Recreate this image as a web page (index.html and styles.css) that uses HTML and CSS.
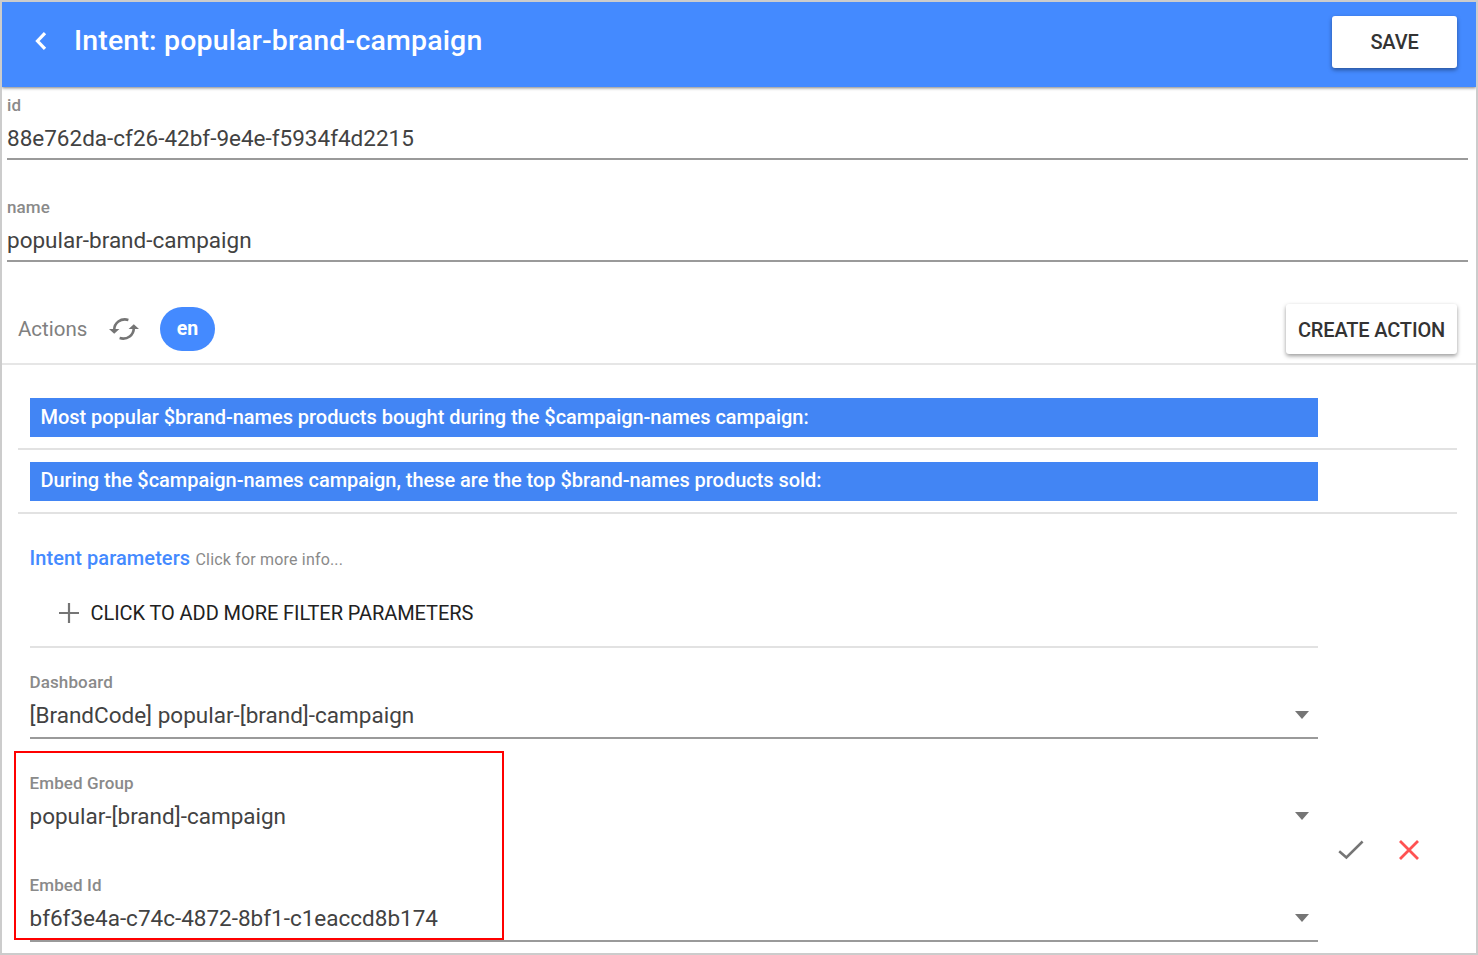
FILE: index.html
```html
<!DOCTYPE html>
<html lang="en">
<head>
<meta charset="utf-8">
<title>Intent: popular-brand-campaign</title>
<link rel="stylesheet" href="styles.css">
</head>
<body>
<div class="window">
  <header class="toolbar">
    <svg class="back" width="14" height="20" viewBox="0 0 14 20"><path d="M12 2.200 4.500 10l7.500 7.800" fill="none" stroke="#fff" stroke-width="3.200"/></svg>
    <h1 class="title"><span>Intent: popular-brand-campaign</span></h1>
    <button class="btn save"><span>SAVE</span></button>
  </header>
  <section class="details">
    <div class="field"><label class="label"><span>id</span></label><div class="value"><span>88e762da-cf26-42bf-9e4e-f5934f4d2215</span></div></div>
    <div class="field"><label class="label"><span>name</span></label><div class="value"><span>popular-brand-campaign</span></div></div>
  </section>
  <section class="actions">
    <span class="actions-title">Actions</span>
    <svg class="refresh" width="30" height="24" viewBox="0 0 30 24"><g fill="none" stroke="#757575" stroke-width="2.6"><path d="M5.2 13C5.2 6 11.5 .8 19.4 2.9"/><path d="M24.8 11C24.8 18 18.500 23.2 10.600 21.100"/></g><path d="M0 12h10.400L5.200 16.800zM30 12H19.600L24.800 7.200z" fill="#757575"/></svg>
    <span class="lang">en</span>
    <button class="btn create"><span>CREATE ACTION</span></button>
  </section>
  <ul class="phrases">
    <li class="phrase"><div class="phrase-text"><span>Most popular $brand-names products bought during the $campaign-names campaign:</span></div></li>
    <li class="phrase"><div class="phrase-text"><span>During the $campaign-names campaign, these are the top $brand-names products sold:</span></div></li>
  </ul>
  <section class="editor">
    <div class="form">
      <div class="params"><span class="params-title">Intent parameters</span><span class="params-info">Click for more info...</span></div>
      <div class="add">
        <svg width="20" height="20" viewBox="0 0 20 20"><path d="M0 10h20M10 0v20" stroke="#757575" stroke-width="2.200"/></svg>
        <span class="add-text">CLICK TO ADD MORE FILTER PARAMETERS</span>
      </div>
      <div class="field select"><label class="label"><span>Dashboard</span></label><div class="value"><span>[BrandCode] popular-[brand]-campaign</span><i class="caret"></i></div></div>
      <div class="field select plain"><label class="label"><span>Embed Group</span></label><div class="value"><span>popular-[brand]-campaign</span><i class="caret"></i></div></div>
      <div class="field select"><label class="label"><span>Embed Id</span></label><div class="value"><span>bf6f3e4a-c74c-4872-8bf1-c1eaccd8b174</span><i class="caret"></i></div></div>
    </div>
    <div class="tools">
      <svg width="26" height="20" viewBox="0 0 26 20"><path d="M1.200 11.200 8.400 17.500 24.600 1.500" fill="none" stroke="#757575" stroke-width="2.500"/></svg>
      <svg width="20" height="20" viewBox="0 0 20 20"><path d="M1 1l18 18M19 1 1 19" fill="none" stroke="#ff5252" stroke-width="2.800"/></svg>
    </div>
  </section>
  <div class="highlight"></div>
</div>
</body>
</html>
```
FILE: styles.css
```css
* { box-sizing: border-box; }
body { margin: 0; background: #fff; font-family: Roboto, "Liberation Sans", sans-serif; color: #424242; }
.window { position: relative; width: 1478px; height: 955px; border: 2px solid #ccc; overflow: hidden; }
.toolbar { display: flex; align-items: center; height: 85px; padding: 0 19px 8px 31px; background: #448aff; box-shadow: 0 1px 3px rgba(0,0,0,.5); }
.title { margin: 0 0 0 27px; flex: 1; font-size: 28.5px; font-weight: 500; line-height: 40px; color: #fff; letter-spacing: .17px; }
.btn { border: 0; border-radius: 3px; padding: 0; background: #fff; font: 500 20px/28px Roboto, sans-serif; color: #333; text-align: center; letter-spacing: -.15px; box-shadow: 0 2px 4px rgba(0,0,0,.4); }
.save { width: 125px; height: 52px; margin-top: 2px; }
.details { padding: 0 8px 0 5px; }
.field { height: 73px; margin-bottom: 29px; padding-top: 8px; border-bottom: 2px solid #9a9a9a; }
.details .field:last-child { margin-bottom: 0; }
.label { display: block; height: 20px; margin-bottom: 7px; font-size: 17px; font-weight: 500; line-height: 20px; color: #8a8a8a; letter-spacing: .12px; }
.value { display: flex; justify-content: space-between; align-items: center; height: 32px; font-size: 22.5px; line-height: 32px; }
.actions { display: flex; align-items: center; height: 61px; margin-top: 42px; padding: 0 18px 9px 16px; border-bottom: 2px solid #e6e6e6; }
.actions-title { width: 91px; font-size: 20.5px; line-height: 24px; padding-bottom: 1px; color: #808080; }
.lang { width: 55px; height: 44px; margin-left: 21px; border-radius: 22px; background: #448aff; color: #fff; font-size: 19.5px; font-weight: 700; line-height: 43px; text-align: center; }
.create { width: 171px; height: 50px; margin-left: auto; margin-right: 1px; padding-top: 2px; }
.phrases { margin: 0 19px 0 16px; padding: 33px 0 0; list-style: none; }
.phrase { height: 51.5px; padding: 0 139px 0 12px; border-bottom: 2px solid #e2e2e2; margin-bottom: 12.5px; }
.phrase-text { height: 39px; padding-left: 10.5px; background: #4285f4; color: #fff; font-size: 20px; font-weight: 500; line-height: 38px; letter-spacing: -.035px; white-space: nowrap; }
.phrase + .phrase .phrase-text { line-height: 36px; }
.editor { display: flex; padding-left: 27.5px; margin-top: -12px; }
.form { width: 1288px; padding-top: 32px; }
.params { display: flex; align-items: baseline; height: 24px; line-height: 24px; }
.params-title { width: 166px; font-size: 20px; font-weight: 500; color: #448aff; letter-spacing: .08px; }
.params-info { font-size: 16px; color: #8a8a8a; letter-spacing: .18px; }
.add { display: flex; align-items: center; height: 78px; padding: 9px 0 0 29px; border-bottom: 2px solid #e2e2e2; }
.add-text { margin-left: 12px; font-size: 20px; color: #212121; letter-spacing: -.07px; }
.add + .field { margin-top: 17px; }
.select { height: 74px; margin-bottom: 27px; padding-top: 7.4px; }
.select.plain { border-bottom-color: transparent; margin-bottom: 27.5px; }
.caret { width: 0; height: 0; margin-right: 9px; border: 7px solid transparent; border-top: 8px solid #757575; border-bottom: 0; }
.tools { display: flex; align-items: center; gap: 35px; height: 20px; margin: 326px 0 0 20px; }
.highlight { position: absolute; left: 12px; top: 749px; width: 490px; height: 189px; border: 2px solid #f00; }
```
